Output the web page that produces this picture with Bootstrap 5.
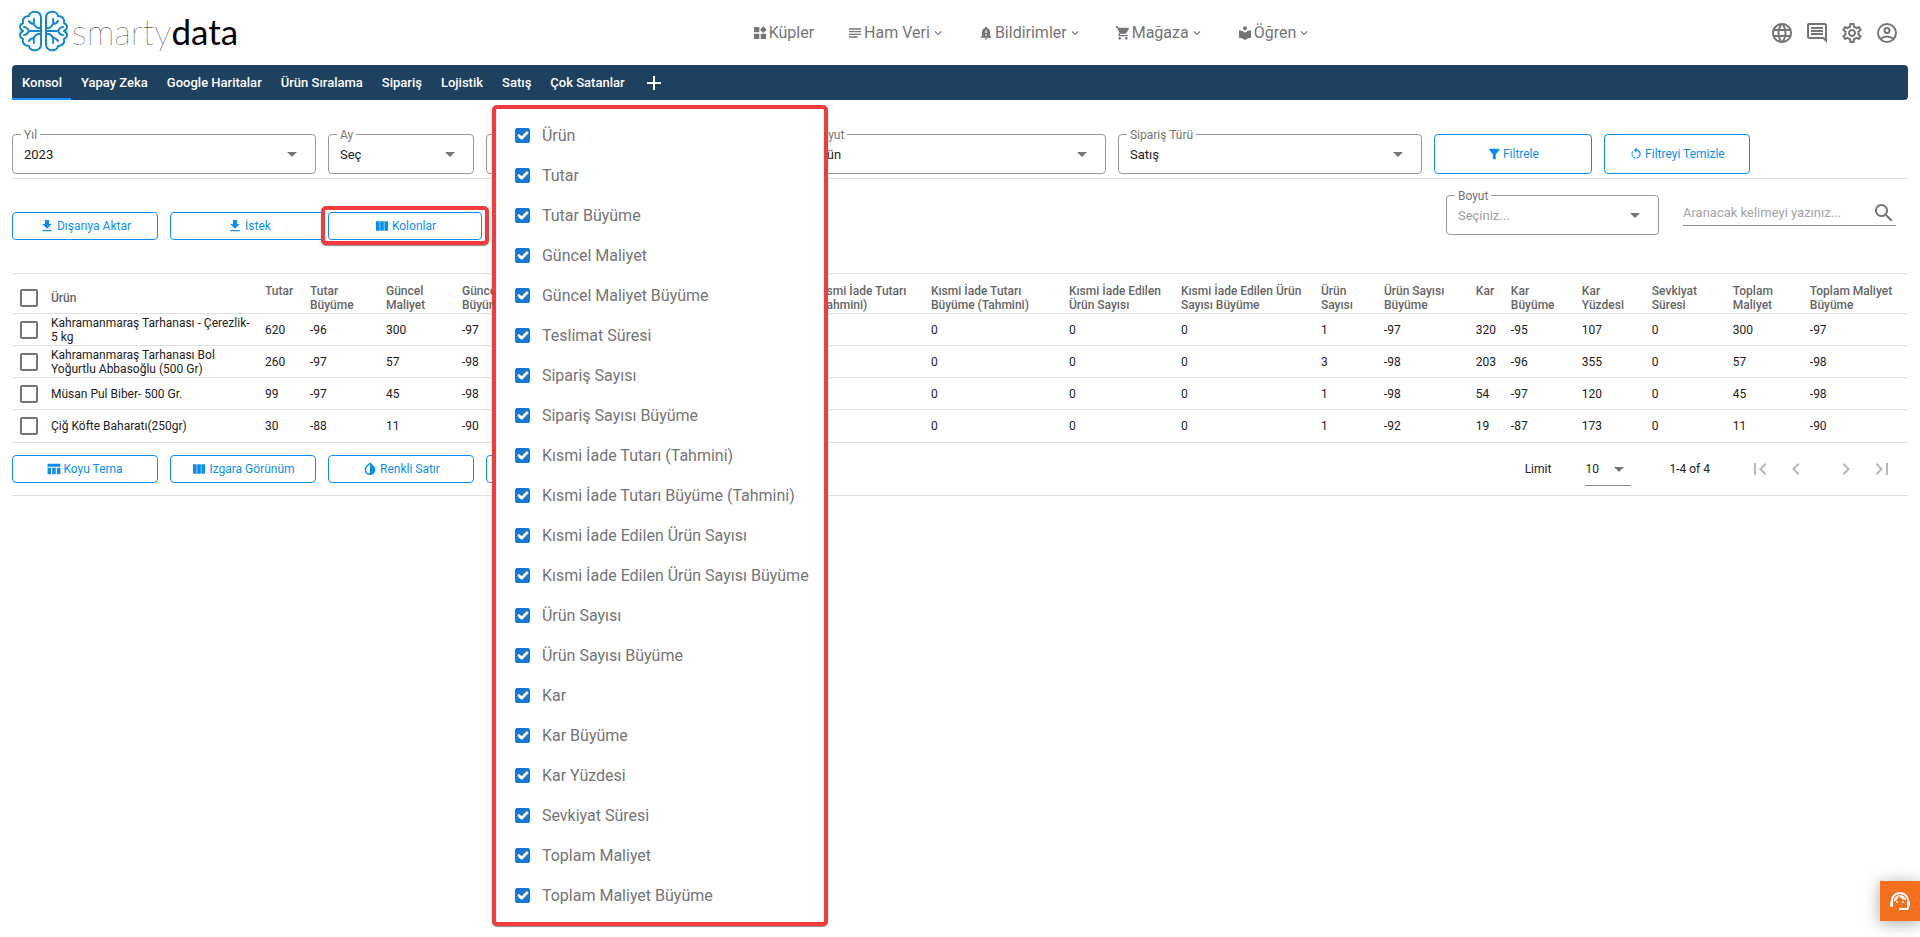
<!DOCTYPE html>
<html lang="tr">
<head>
<meta charset="utf-8">
<meta name="viewport" content="width=device-width, initial-scale=1">
<title>smartydata</title>
<link href="https://cdn.jsdelivr.net/npm/bootstrap@5.3.0/dist/css/bootstrap.min.css" rel="stylesheet">
<style>
:root { --ink: #212121; --muted: #757575; --blue: #0b8fee; --line: #e0e0e0; --alert: #f33b3b; }
body { min-height: 100vh; font-family: Roboto, "Noto Sans", sans-serif; font-size: 12px; line-height: 14px; color: var(--ink); }
svg { display: block; fill: currentColor; flex: none; }
.i-sm { width: 14px; height: 14px; }
.i-md { width: 16px; height: 16px; }
.i-lg { width: 24px; height: 24px; }
.bare { background: none; border: 0; padding: 0; }

.site-head { height: 65px; padding: 0 21px 0 17px; color: var(--muted); }
.head-start { flex: 5 1 0; }
.head-end { flex: 4 1 0; gap: 11px; }
.head-end button { color: var(--muted); }
.brand { color: #000; text-decoration: none; font: 100 35px/40px Lato, sans-serif; gap: 3px; }
.brand b { font-weight: 400; }
.brand svg { fill: none; }
.main-menu { gap: 33px; }
.main-menu a { color: var(--muted); text-decoration: none; font-size: 16px; line-height: 24px; gap: 1px; }

.page { margin: 0 12px; }
.tab-strip { background: #1e415f; border-radius: 4px; height: 35px; }
.tab-strip a { color: #fff; font-size: 13px; font-weight: 500; line-height: 35px; padding: 0 9px 0 10px; text-decoration: none; height: 35px; }
.tab-strip a.active { box-shadow: inset 0 -2px #1e90ff; }
.tab-strip button { padding-left: 10px; }

.g12 { --bs-gutter-x: 12px; margin-right: 6px; }
.col-plus { flex: none; width: calc(100% / 12 + 12px); }
.under { border-bottom: 1px solid var(--line); }
.filters { padding: 34px 0 4px; }
.field { position: relative; }
.field label { position: absolute; left: 9px; top: -6px; padding: 0 3px; background: #fff; color: var(--muted); line-height: 14px; }
.field select { appearance: none; width: 100%; height: 40px; border: 1px solid #9a9a9a; border-radius: 4px; background: #fff; color: var(--ink); padding: 1px 32px 0 11px; font-size: 13px; line-height: 18px; }
.field.empty select { color: #9e9e9e; }
.field svg { position: absolute; right: 12px; top: 8px; color: var(--muted); pointer-events: none; }
.out-btn { --bs-btn-color: var(--blue); --bs-btn-border-color: var(--blue); --bs-btn-padding-y: 0; --bs-btn-padding-x: 4px; --bs-btn-font-size: 12px; --bs-btn-line-height: 14px; --bs-btn-border-radius: 4px; display: flex; align-items: center; justify-content: center; gap: 2px; width: 100%; height: 28px; background: #fff; }
.out-btn.tall { height: 40px; }
.out-btn.wide { width: calc(100% + 12px); }

.actions { height: 94px; padding-top: 33px; }
.marked { position: relative; z-index: 5; margin: -6px 0 0 -7px; width: 168px; border: 4px solid var(--alert); border-radius: 5px; padding: 2px 3px 1px; background: #fff; box-shadow: 0 1px 1px #888; }
.column-menu { position: absolute; left: 167px; top: -105px; width: 336px; margin: 0; padding: 7px 0 6px; border: 4px solid var(--alert); border-radius: 5px; box-shadow: 0 1px 1px #888; list-style: none; background: #fff; z-index: 10; }
.column-menu label { display: flex; align-items: center; gap: 12px; height: 40px; padding-left: 19px; font-size: 16px; line-height: 24px; color: var(--muted); white-space: nowrap; }
.column-menu .form-check-input { width: 15px; height: 15px; margin: 0 0 2px; border-radius: 2px; border-color: #1976d2; background-color: #1976d2; background-size: 18px; }
.size-field { width: 213px; margin: -17px 24px 0 auto; }
.search-line { width: 213px; height: 30px; margin-top: -16px; padding-top: 5px; border-bottom: 1px solid #8c8c8c; }
.search-line input { border: 0; outline: 0; padding: 0; width: 100%; min-width: 0; font-size: 13px; color: var(--ink); }
.search-line input::placeholder { color: #a3a3a3; opacity: 1; }
.search-line button { color: var(--muted); }

.grid-table { table-layout: fixed; width: 100%; border-collapse: collapse; border-top: 1px solid var(--line); }
.grid-table tr { border-bottom: 1px solid var(--line); }
.grid-table th { height: 40px; padding: 10px 0 0; vertical-align: top; font-weight: 500; color: #666; }
.grid-table th.mid { padding: 9px 0 0; vertical-align: middle; }
.grid-table td { height: 32px; padding: 0; vertical-align: middle; }
.grid-table tr:last-child td { height: 33px; }
.grid-table td:nth-child(2) { padding-right: 12px; }
.grid-table .form-check-input { display: block; width: 18px; height: 18px; margin: 0 0 0 8px; border: 2px solid var(--muted); border-radius: 2px; }

.pager { height: 53px; }
.pager .row { flex: 1; }
.page-nav { margin-right: 2px; }
.page-nav label { margin-right: 34px; }
.limit { position: relative; width: 46px; margin-right: 38px; border-bottom: 1px solid #8c8c8c; }
.limit select { appearance: none; border: 0; background: none; width: 100%; height: 32px; padding: 0; font-size: 12px; color: var(--ink); }
.limit svg { position: absolute; right: 0; top: 4px; color: var(--muted); pointer-events: none; }
.page-nav span { margin-right: 38px; }
.page-nav .bare { color: #b8b8b8; }
.step { gap: 12px; }
.step + .step { margin-left: 26px; }
.chat-btn { position: fixed; right: 0; bottom: 16px; width: 40px; height: 40px; background: #f37021; color: #fff; box-shadow: 0 2px 16px rgba(0,0,0,.35); z-index: 20; }
</style>
</head>
<body>
<svg class="d-none" xmlns="http://www.w3.org/2000/svg">
  <symbol id="caret" viewBox="0 0 24 24"><path d="M7 10l5 5 5-5z"/></symbol>
  <symbol id="chev" viewBox="0 0 24 24"><path d="M7.41 8.59 12 13.17l4.59-4.58L18 10l-6 6-6-6z"/></symbol>
  <symbol id="down" viewBox="0 0 24 24"><path d="M19 9h-4V3H9v6H5l7 7 7-7zM5 18v2h14v-2H5z"/></symbol>
  <symbol id="week" viewBox="0 0 24 24"><path d="M3 5h5.500v14H3zM9.300 5h5.500v14H9.300zM15.600 5h5.500v14h-5.500z"/></symbol>
</svg>

<header class="site-head d-flex align-items-center">
  <div class="head-start">
    <a class="brand d-inline-flex align-items-center" href="#">
      <svg width="52" height="42" viewBox="0 0 52 42" stroke="#1488cf" stroke-width="2" stroke-linecap="round" stroke-linejoin="round">
        <g id="half"><path d="M24 8C24 0 13 0 12 6C7 6 5 10 6 13C2 15 2 19 6 21C2 23 2 27 6 29C5 32 7 36 12 36C13 42 24 42 24 34ZM7 17C10 17 11 19 12 21C11 23 10 25 7 25M12 21H24M24 18H21C18 17 16 14 17 9M17 14C15 14 13 13 12 11M24 24H21C18 25 16 28 17 33M17 28C15 28 13 29 12 31"/></g>
        <use href="#half" transform="matrix(-1 0 0 1 53 0)"/>
      </svg>
      <span>smarty<b>data</b></span>
    </a>
  </div>
  <nav class="main-menu d-flex align-items-center">
    <a href="#" class="d-flex align-items-center"><svg class="i-md" viewBox="0 0 24 24"><path d="M13 13v8h8v-8h-8zM3 21h8v-8H3v8zM3 3v8h8V3H3zm14-1-5 5 5 5 5-5z"/></svg>Küpler</a>
    <a href="#" class="d-flex align-items-center"><svg class="i-md" viewBox="0 0 24 24"><path d="M16 17H3v2h13v-2zm5-8H3v2h18V9zM3 15h18v-2H3v2zM3 5v2h18V5H3z"/></svg>Ham Veri<svg class="i-sm"><use href="#chev"/></svg></a>
    <a href="#" class="d-flex align-items-center"><svg class="i-md" viewBox="0 0 24 24"><path d="M18 16v-5c0-3.07-1.64-5.64-4.5-6.32V4c0-.83-.67-1.5-1.5-1.5s-1.5.67-1.5 1.5v.68C7.63 5.36 6 7.92 6 11v5l-2 2v1h16v-1l-2-2zm-5 0h-2v-2h2v2zm0-4h-2V8h2v4zm-1 10c1.1 0 2-.9 2-2h-4c0 1.1.89 2 2 2z"/></svg>Bildirimler<svg class="i-sm"><use href="#chev"/></svg></a>
    <a href="#" class="d-flex align-items-center"><svg class="i-md" viewBox="0 0 24 24"><path d="M7 18c-1.1 0-1.99.9-1.99 2S5.9 22 7 22s2-.9 2-2-.9-2-2-2zM1 2v2h2l3.600 7.590-1.350 2.450c-.16.280-.25.610-.25.960 0 1.100.9 2 2 2h12v-2H7.420c-.14 0-.25-.11-.25-.25l.03-.12.9-1.630h7.450c.75 0 1.410-.41 1.750-1.030l3.580-6.490c.08-.14.120-.31.120-.48 0-.55-.45-1-1-1H5.210l-.94-2H1zm16 16c-1.100 0-1.990.9-1.990 2s.890 2 1.990 2 2-.9 2-2-.9-2-2-2z"/></svg>Mağaza<svg class="i-sm"><use href="#chev"/></svg></a>
    <a href="#" class="d-flex align-items-center"><svg class="i-md" viewBox="0 0 24 24"><path d="M12 11.550C9.640 9.350 6.480 8 3 8v11c3.480 0 6.640 1.350 9 3.550 2.360-2.190 5.520-3.550 9-3.550V8c-3.480 0-6.640 1.350-9 3.550zM12 8c1.660 0 3-1.340 3-3s-1.340-3-3-3-3 1.340-3 3 1.340 3 3 3z"/></svg>Öğren<svg class="i-sm"><use href="#chev"/></svg></a>
  </nav>
  <div class="head-end d-flex justify-content-end">
    <button class="bare" aria-label="Dil"><svg class="i-lg" viewBox="0 0 24 24"><path d="M11.990 2C6.470 2 2 6.480 2 12s4.470 10 9.990 10C17.520 22 22 17.520 22 12S17.520 2 11.990 2zm6.930 6h-2.950c-.32-1.250-.78-2.450-1.380-3.560 1.840.63 3.370 1.910 4.330 3.560zM12 4.040c.83 1.200 1.480 2.530 1.910 3.960h-3.820c.43-1.430 1.080-2.760 1.910-3.960zM4.260 14C4.100 13.360 4 12.690 4 12s.1-1.360.26-2h3.380c-.08.66-.14 1.320-.14 2 0 .68.06 1.340.14 2H4.260zm.82 2h2.950c.32 1.250.78 2.450 1.380 3.560-1.840-.63-3.370-1.900-4.330-3.560zm2.950-8H5.080c.96-1.660 2.490-2.930 4.330-3.560C8.810 5.550 8.350 6.750 8.030 8zM12 19.960c-.83-1.200-1.480-2.530-1.910-3.960h3.820c-.43 1.430-1.080 2.760-1.910 3.960zM14.340 14H9.660c-.09-.66-.16-1.320-.16-2 0-.68.07-1.350.16-2h4.680c.09.65.16 1.320.16 2 0 .68-.07 1.340-.16 2zm.25 5.560c.6-1.110 1.060-2.310 1.380-3.560h2.950c-.96 1.650-2.490 2.930-4.330 3.560zM16.360 14c.08-.66.14-1.320.14-2 0-.68-.06-1.340-.14-2h3.380c.16.64.26 1.310.26 2s-.1 1.360-.26 2h-3.380z"/></svg></button>
    <button class="bare" aria-label="Mesajlar"><svg class="i-lg" viewBox="0 0 24 24"><path fill-rule="evenodd" d="M22 4c0-1.100-.9-2-2-2H4c-1.100 0-2 .9-2 2v12c0 1.100.9 2 2 2h14l4 4V4zm-2 13.170L18.830 16H4V4h16v13.170zM6 12h12v2H6zm0-3h12v2H6zm0-3h12v2H6z"/></svg></button>
    <button class="bare" aria-label="Ayarlar"><svg class="i-lg" viewBox="0 0 24 24"><path d="M19.430 12.980c.04-.32.07-.64.07-.98 0-.34-.03-.66-.07-.98l2.110-1.650c.19-.15.24-.42.12-.64l-2-3.460c-.09-.16-.26-.25-.44-.25-.06 0-.12.01-.17.03l-2.490 1c-.52-.4-1.080-.73-1.690-.98l-.38-2.650C14.460 2.180 14.250 2 14 2h-4c-.25 0-.46.18-.49.42l-.38 2.650c-.61.25-1.170.59-1.690.98l-2.490-1c-.06-.02-.12-.03-.18-.03-.17 0-.34.09-.43.25l-2 3.460c-.13.22-.07.49.12.64l2.110 1.650c-.04.32-.07.65-.07.98 0 .33.03.66.07.98l-2.110 1.650c-.19.15-.24.42-.12.64l2 3.460c.09.16.26.25.44.25.06 0 .12-.01.17-.03l2.490-1c.52.4 1.080.73 1.690.98l.38 2.650c.03.24.24.42.49.42h4c.25 0 .46-.18.49-.42l.38-2.650c.61-.25 1.170-.59 1.690-.98l2.490 1c.06.02.12.03.18.03.17 0 .34-.09.43-.25l2-3.460c.12-.22.07-.49-.12-.64l-2.110-1.650zm-1.980-1.710c.04.31.05.52.05.73 0 .21-.02.43-.05.73l-.14 1.130.89.7 1.080.84-.7 1.210-1.270-.51-1.040-.42-.9.68c-.43.32-.84.56-1.250.73l-1.060.43-.16 1.130-.2 1.350h-1.400l-.19-1.350-.16-1.130-1.060-.43c-.43-.18-.83-.41-1.230-.71l-.91-.7-1.060.43-1.270.51-.7-1.210 1.080-.84.89-.7-.14-1.130c-.03-.31-.05-.54-.05-.74s.02-.43.05-.73l.14-1.130-.89-.7-1.080-.84.7-1.210 1.270.51 1.040.42.9-.68c.43-.32.84-.56 1.250-.73l1.060-.43.16-1.130.2-1.350h1.390l.19 1.350.16 1.130 1.060.43c.43.18.83.41 1.230.71l.91.7 1.060-.43 1.270-.51.7 1.210-1.070.85-.89.7.14 1.130zM12 8c-2.210 0-4 1.790-4 4s1.790 4 4 4 4-1.790 4-4-1.790-4-4-4zm0 6c-1.100 0-2-.9-2-2s.9-2 2-2 2 .9 2 2-.9 2-2 2z"/></svg></button>
    <button class="bare" aria-label="Hesap"><svg class="i-lg" viewBox="0 0 24 24"><g fill="none" stroke="currentColor" stroke-width="2"><circle cx="12" cy="12" r="9"/><circle cx="12" cy="9.500" r="2.500"/><path d="M5.500 18c3.500-3.300 9.500-3.300 13 0"/></g></svg></button>
  </div>
</header>

<main class="page">
  <nav class="tab-strip d-flex">
    <a class="active" href="#">Konsol</a><a href="#">Yapay Zeka</a><a href="#">Google Haritalar</a><a href="#">Ürün Sıralama</a><a href="#">Sipariş</a><a href="#">Lojistik</a><a href="#">Satış</a><a href="#">Çok Satanlar</a>
    <button class="bare text-white" aria-label="Sekme ekle"><svg width="20" height="20" viewBox="0 0 20 20"><path d="M9 3h2v6h6v2h-6v6H9v-6H3V9h6z"/></svg></button>
  </nav>

  <form class="filters under">
    <div class="row g12">
      <div class="col-2"><div class="field"><select id="yil"><option>2023</option></select><label for="yil">Yıl</label><svg class="i-lg"><use href="#caret"/></svg></div></div>
      <div class="col-1"><div class="field"><select id="ay"><option>Seç</option></select><label for="ay">Ay</label><svg class="i-lg"><use href="#caret"/></svg></div></div>
      <div class="col-2"><div class="field"><select id="gun" aria-label="Gün"><option></option></select><svg class="i-lg"><use href="#caret"/></svg></div></div>
      <div class="col-2"><div class="field"><select id="boyut"><option>Ürün</option></select><label for="boyut">Boyut</label><svg class="i-lg"><use href="#caret"/></svg></div></div>
      <div class="col-2"><div class="field"><select id="tur"><option>Satış</option></select><label for="tur">Sipariş Türü</label><svg class="i-lg"><use href="#caret"/></svg></div></div>
      <div class="col-plus"><button type="button" class="btn out-btn tall"><svg class="i-sm" viewBox="0 0 24 24"><path d="M4 3h17v2l-6 8v8h-5v-8L4 5z"/></svg>Filtrele</button></div>
      <div class="col-1"><button type="button" class="btn out-btn tall"><svg class="i-sm" viewBox="0 0 24 24"><path d="M7.110 8.530L5.700 7.110C4.800 8.270 4.240 9.610 4.070 11h2.020c.14-.87.49-1.720 1.020-2.470zM6.090 13H4.070c.17 1.390.72 2.730 1.620 3.890l1.410-1.420c-.52-.75-.87-1.590-1.010-2.470zm1.010 5.320c1.160.9 2.510 1.440 3.900 1.610V17.900c-.87-.15-1.710-.49-2.460-1.030L7.100 18.320zM13 4.070V1L8.450 5.550 13 10V6.090c2.840.48 5 2.940 5 5.910s-2.160 5.430-5 5.910v2.020c3.950-.49 7-3.850 7-7.930s-3.050-7.440-7-7.930z"/></svg>Filtreyi Temizle</button></div>
    </div>
  </form>

  <div class="actions">
    <div class="row g12">
      <div class="col-1"><button class="btn out-btn"><svg class="i-md"><use href="#down"/></svg>Dışarıya Aktar</button></div>
      <div class="col-1"><button class="btn out-btn wide"><svg class="i-md"><use href="#down"/></svg>İstek</button></div>
      <div class="col-1">
        <div class="marked">
          <button class="btn out-btn" aria-expanded="true"><svg class="i-md"><use href="#week"/></svg>Kolonlar</button>
          <ul class="column-menu" id="columns"></ul>
        </div>
      </div>
      <div class="col-9 d-flex">
        <div class="field empty size-field"><select id="boyut2"><option>Seçiniz...</option></select><label for="boyut2">Boyut</label><svg class="i-lg"><use href="#caret"/></svg></div>
        <div class="search-line d-flex align-items-center"><input type="text" placeholder="Aranacak kelimeyi yazınız..." aria-label="Ara"><button class="bare" aria-label="Ara"><svg class="i-lg" viewBox="0 0 24 24"><path d="M15.500 14h-.79l-.28-.27C15.410 12.590 16 11.110 16 9.500 16 5.910 13.090 3 9.500 3S3 5.910 3 9.500 5.910 16 9.500 16c1.610 0 3.090-.59 4.230-1.570l.27.28v.79l5 4.990L20.490 19l-4.990-5zm-6 0C7.010 14 5 11.990 5 9.500S7.010 5 9.500 5 14 7.010 14 9.500 11.990 14 9.500 14z"/></svg></button></div>
      </div>
    </div>
  </div>

  <table class="grid-table">
    <colgroup id="cols"></colgroup>
    <thead><tr id="head"></tr></thead>
    <tbody id="rows"></tbody>
  </table>

  <div class="pager under d-flex align-items-center">
    <div class="row g12 align-items-center">
      <div class="col-1"><button class="btn out-btn"><svg class="i-sm" viewBox="0 0 24 24"><path d="M1 3h22v5H1zM1 10h6v11H1zM9 10h6v11H9zM17 10h6v11h-6z"/></svg>Koyu Tema</button></div>
      <div class="col-1"><button class="btn out-btn"><svg class="i-md"><use href="#week"/></svg>Izgara Görünüm</button></div>
      <div class="col-1"><button class="btn out-btn"><svg class="i-md" viewBox="0 0 24 24"><path fill-rule="evenodd" d="M12 2 6.350 7.560C4.900 8.990 4 10.960 4 13.130 4 17.480 7.580 21 12 21s8-3.520 8-7.870c0-2.170-.9-4.140-2.350-5.570zM12 4.810V19c-3.310 0-6-2.630-6-5.870 0-1.560.62-3.030 1.750-4.140z"/></svg>Renkli Satır</button></div>
      <div class="col-1"><button class="btn out-btn" aria-label="Diğer"></button></div>
      <div class="col-8 d-flex">
        <div class="page-nav d-flex align-items-center ms-auto">
          <label for="limit">Limit</label>
          <div class="limit"><select id="limit"><option>10</option></select><svg class="i-lg"><use href="#caret"/></svg></div>
          <span>1-4 of 4</span>
          <div class="step d-flex">
            <button class="bare" aria-label="İlk sayfa"><svg class="i-lg" viewBox="0 0 24 24"><path d="M18.410 16.590 13.820 12l4.590-4.590L17 6l-6 6 6 6zM6 6h2v12H6z"/></svg></button>
            <button class="bare" aria-label="Önceki"><svg class="i-lg" viewBox="0 0 24 24"><path d="M15.410 7.410 14 6l-6 6 6 6 1.410-1.410L10.830 12z"/></svg></button>
          </div>
          <div class="step d-flex">
            <button class="bare" aria-label="Sonraki"><svg class="i-lg" viewBox="0 0 24 24"><path d="M10 6 8.590 7.410 13.170 12l-4.580 4.590L10 18l6-6z"/></svg></button>
            <button class="bare" aria-label="Son sayfa"><svg class="i-lg" viewBox="0 0 24 24"><path d="M5.590 7.410 10.180 12l-4.590 4.590L7 18l6-6-6-6zM16 6h2v12h-2z"/></svg></button>
          </div>
        </div>
      </div>
    </div>
  </div>
</main>

<button class="bare chat-btn d-flex align-items-center justify-content-center" aria-label="Destek"><svg class="i-lg" viewBox="0 0 24 24"><path d="M21 12.220C21 6.730 16.740 3 12 3c-4.690 0-9 3.650-9 9.280-.6.34-1 .98-1 1.720v2c0 1.100.9 2 2 2h1v-6.100c0-3.870 3.130-7 7-7s7 3.130 7 7V19h-8v2h8c1.100 0 2-.9 2-2v-1.220c.59-.31 1-.92 1-1.640v-2.300c0-.7-.41-1.310-1-1.620z"/><circle cx="9" cy="13" r="1"/><circle cx="15" cy="13" r="1"/><path d="M18 11.030C17.520 8.180 15.040 6 12.050 6c-3.030 0-6.290 2.510-6.030 6.450 2.470-1.010 4.330-3.210 4.860-5.890 1.310 2.630 4 4.440 7.120 4.470z"/></svg></button>

<script src="https://cdn.jsdelivr.net/npm/bootstrap@5.3.0/dist/js/bootstrap.bundle.min.js"></script>
<script>
const names = ["Ürün","Tutar","Tutar Büyüme","Güncel Maliyet","Güncel Maliyet Büyüme","Teslimat Süresi","Sipariş Sayısı","Sipariş Sayısı Büyüme","Kısmi İade Tutarı (Tahmini)","Kısmi İade Tutarı Büyüme (Tahmini)","Kısmi İade Edilen Ürün Sayısı","Kısmi İade Edilen Ürün Sayısı Büyüme","Ürün Sayısı","Ürün Sayısı Büyüme","Kar","Kar Büyüme","Kar Yüzdesi","Sevkiyat Süresi","Toplam Maliyet","Toplam Maliyet Büyüme"];
const heads = ["Ürün","Tutar","Tutar<br>Büyüme","Güncel<br>Maliyet","Güncel<br>Büyüme","","","","Kısmi İade Tutarı<br>(Tahmini)","Kısmi İade Tutarı<br>Büyüme (Tahmini)","Kısmi İade Edilen<br>Ürün Sayısı","Kısmi İade Edilen Ürün<br>Sayısı Büyüme","Ürün<br>Sayısı","Ürün Sayısı<br>Büyüme","Kar","Kar<br>Büyüme","Kar<br>Yüzdesi","Sevkiyat<br>Süresi","Toplam<br>Maliyet","Toplam Maliyet<br>Büyüme"];
const widths = [39,214,45,76,76,95,80,80,99,115,138,112,140,63,92,35,71,70,81,77,98];
const data = [
 ["Kahramanmaraş Tarhanası - Çerezlik- 5 kg",620,-96,300,-97,"","","","",0,0,0,1,-97,320,-95,107,0,300,-97],
 ["Kahramanmaraş Tarhanası Bol Yoğurtlu Abbasoğlu (500 Gr)",260,-97,57,-98,"","","","",0,0,0,3,-98,203,-96,355,0,57,-98],
 ["Müsan Pul Biber- 500 Gr.",99,-97,45,-98,"","","","",0,0,0,1,-98,54,-97,120,0,45,-98],
 ["Çiğ Köfte Baharatı(250gr)",30,-88,11,-90,"","","","",0,0,0,1,-92,19,-87,173,0,11,-90]];
const total = widths.reduce((a, b) => a + b);
const byId = id => document.getElementById(id);
const tick = l => `<input type="checkbox" class="form-check-input" aria-label="${l}">`;
byId("cols").innerHTML = widths.map(w => `<col style="width:${w / total * 100}%">`).join("");
byId("head").innerHTML = `<th class="mid">${tick("Tümünü seç")}</th>` + heads.map((n, i) => `<th${i ? "" : ' class="mid"'}>${n}</th>`).join("");
byId("rows").innerHTML = data.map(r => `<tr><td>${tick(r[0])}</td>${r.map(v => `<td>${v}</td>`).join("")}</tr>`).join("");
byId("columns").innerHTML = names.map(n => `<li><label><input type="checkbox" class="form-check-input" checked>${n}</label></li>`).join("");
</script>
</body>
</html>
